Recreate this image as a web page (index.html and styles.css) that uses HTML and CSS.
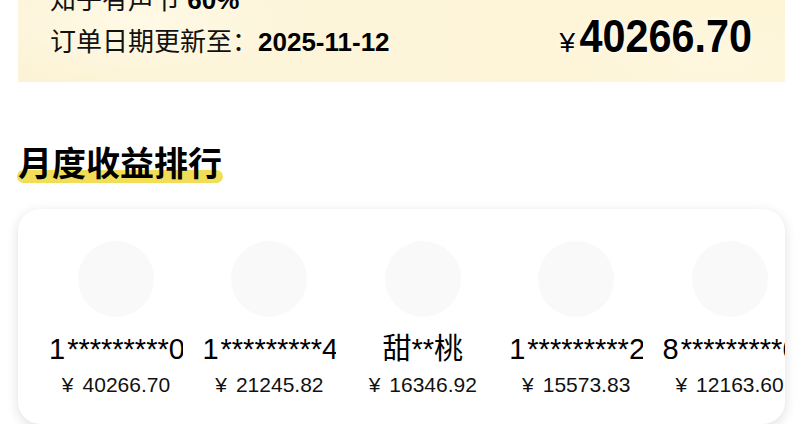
FILE: index.html
```html
<!DOCTYPE html>
<html lang="zh-CN">
<head>
<meta charset="utf-8">
<title>月度收益排行</title>
<link rel="stylesheet" href="styles.css">
</head>
<body>
<div class="page">
  <section class="banner">
    <div class="banner-info">
      <div class="banner-line">知乎有声节 <b>60%</b></div>
      <div class="banner-line">订单日期更新至：<b>2025-11-12</b></div>
    </div>
    <div class="banner-amount"><span class="yen">¥</span><span class="num">40266.70</span></div>
  </section>

  <h2 class="section-title"><span class="title-text">月度收益排行</span></h2>

  <section class="rank-card">
    <div class="rank-list">
      <div class="rank-item">
        <div class="avatar"></div>
        <div class="name"><span class="d">1</span>*********<span class="d">0</span></div>
        <div class="price"><span class="cur">¥</span>40266.70</div>
      </div>
      <div class="rank-item">
        <div class="avatar"></div>
        <div class="name"><span class="d">1</span>*********<span class="d">4</span></div>
        <div class="price"><span class="cur">¥</span>21245.82</div>
      </div>
      <div class="rank-item">
        <div class="avatar"></div>
        <div class="name">甜**桃</div>
        <div class="price"><span class="cur">¥</span>16346.92</div>
      </div>
      <div class="rank-item">
        <div class="avatar"></div>
        <div class="name"><span class="d">1</span>*********<span class="d">2</span></div>
        <div class="price"><span class="cur">¥</span>15573.83</div>
      </div>
      <div class="rank-item">
        <div class="avatar"></div>
        <div class="name"><span class="d">8</span>*********<span class="d">6</span></div>
        <div class="price"><span class="cur">¥</span>12163.60</div>
      </div>
    </div>
  </section>
</div>
</body>
</html>
```

FILE: styles.css
```css
html, body {
  margin: 0;
  padding: 0;
  background: #ffffff;
}
body {
  font-family: "Liberation Sans", "Noto Sans CJK SC", sans-serif;
  color: #000;
}
.page {
  padding: 0 15px 0 18px;
}

/* banner */
.banner {
  height: 82px;
  box-sizing: border-box;
  overflow: hidden;
  display: flex;
  align-items: flex-end;
  justify-content: space-between;
  padding: 0 33px 19px 32px;
  background:
    radial-gradient(ellipse 260px 90px at 120px 20px, rgba(255,250,232,0.9), rgba(255,250,232,0) 70%),
    radial-gradient(ellipse 260px 90px at 700px 60px, rgba(255,248,225,0.8), rgba(255,248,225,0) 70%),
    linear-gradient(90deg, #fcf3d6 0%, #fdf5da 50%, #fdf4d5 100%);
}
.banner-info {
  display: flex;
  flex-direction: column;
}
.banner-line {
  font-size: 26px;
  line-height: 42px;
  color: #111;
  white-space: nowrap;
}
.banner-line b {
  font-weight: 700;
  color: #000;
}
.banner-amount {
  display: flex;
  align-items: baseline;
  line-height: 52px;
  margin-bottom: -6px;
  text-shadow: 0 0 4px #fff, 0 0 2px #fff;
}
.banner-amount .yen {
  font-size: 28px;
  margin-right: 4px;
  color: #000;
}
.banner-amount .num {
  display: inline-block;
  font-family: "Liberation Sans", sans-serif;
  font-weight: 700;
  font-size: 47px;
  color: #000;
  transform: scaleX(0.88);
  transform-origin: right center;
  margin-left: -23px;
}

/* title */
.section-title {
  margin: 60px 0 0;
  font-family: "Noto Sans CJK SC", sans-serif;
  font-weight: 700;
  font-size: 34px;
  line-height: 40px;
}
.title-text {
  position: relative;
  display: inline-block;
  z-index: 0;
}
.title-text::before {
  content: "";
  position: absolute;
  left: -1px;
  right: -1px;
  bottom: -1px;
  height: 13px;
  border-radius: 7px;
  background: #f2dd58;
  z-index: -1;
}

/* card */
.rank-card {
  margin-top: 27px;
  background: #fff;
  border-radius: 22px;
  box-shadow: 0 3px 11px rgba(110, 85, 85, 0.2);
  overflow: hidden;
  padding: 32px 0 27px 31px;
}
.rank-list {
  display: flex;
  gap: 19.4px;
}
.rank-item {
  flex: 0 0 134px;
  width: 134px;
  display: flex;
  flex-direction: column;
  align-items: center;
}
.avatar {
  width: 76px;
  height: 76px;
  border-radius: 50%;
  background: #f9f9f9;
}
.name {
  width: 134px;
  margin-top: 16px;
  font-size: 29px;
  line-height: 32px;
  text-align: center;
  white-space: nowrap;
  overflow: hidden;
  color: #000;
}
.name .d {
  letter-spacing: 2px;
}
.price {
  margin-top: 8px;
  font-size: 21px;
  line-height: 24px;
  color: #111;
  white-space: nowrap;
}
.price .cur {
  margin-right: 9px;
}
```
